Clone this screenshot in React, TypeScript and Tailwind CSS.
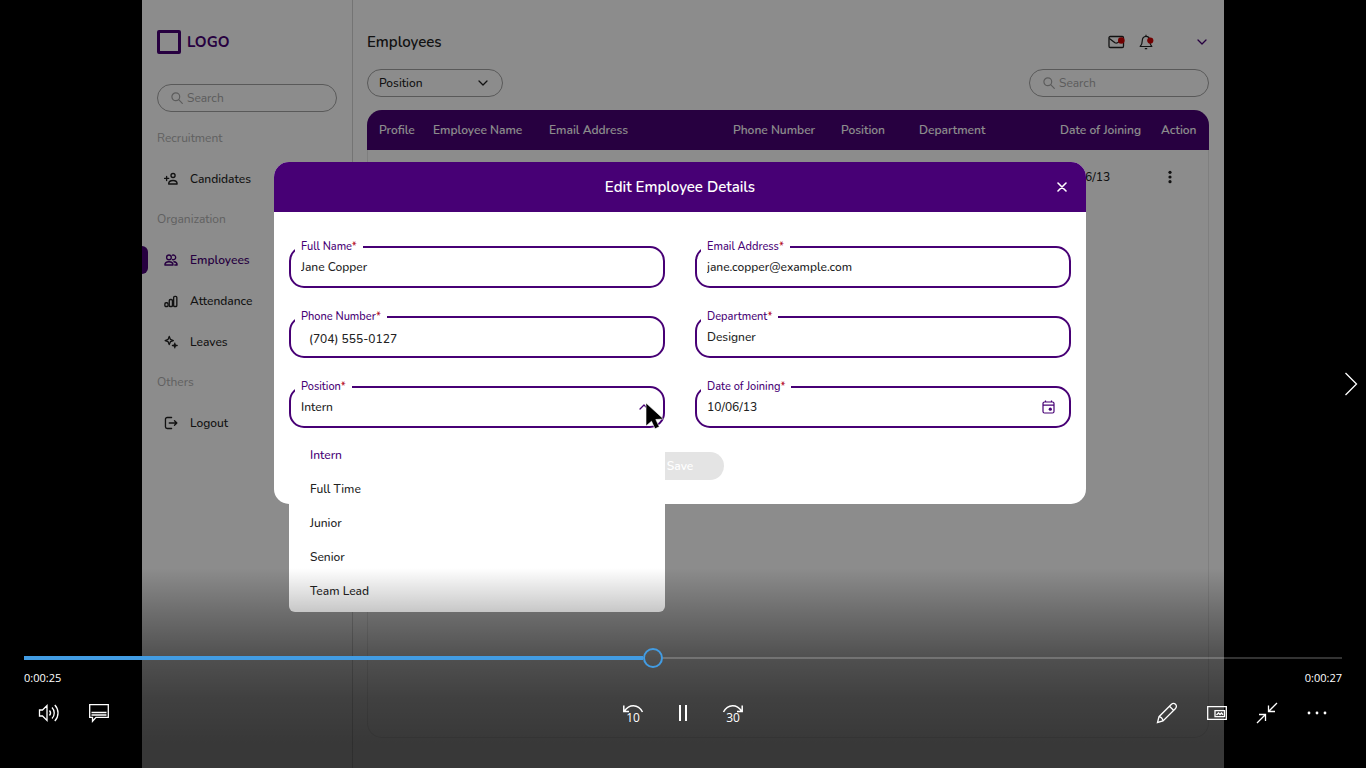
import React, { ReactNode } from "react";

const navGroups = [
  { title: "Recruitment", items: [{ name: "Candidates", icon: "candidates" }] },
  {
    title: "Organization",
    items: [
      { name: "Employees", icon: "employees", active: true },
      { name: "Attendance", icon: "attendance" },
      { name: "Leaves", icon: "leaves" },
    ],
  },
  { title: "Others", items: [{ name: "Logout", icon: "logout" }] },
];

const positions = ["Intern", "Full Time", "Junior", "Senior", "Team Lead"];

const navPaths: Record<string, ReactNode> = {
  candidates: (
    <>
      <circle cx="15.500" cy="6" r="3.500" />
      <path d="M8 20.500h14.500c0-4.500-2.500-6-7-6s-7.500 1.500-7.500 6zM4.500 7.500v7M1 11h7" />
    </>
  ),
  employees: (
    <>
      <circle cx="8.500" cy="7.500" r="4" />
      <path d="M1.500 20.500h14c0-4-2.500-5.500-7-5.500s-7 1.500-7 5.500zM14.500 3.800a4 4 0 1 1 0 7.400M17 15c3.500.3 5.500 2 5.500 5.500h-4" />
    </>
  ),
  attendance: (
    <>
      <rect x="1.500" y="15" width="5.500" height="6.500" rx="2" />
      <rect x="9" y="9.500" width="5.500" height="12" rx="2" />
      <rect x="16.500" y="4" width="5.500" height="17.500" rx="2" />
    </>
  ),
  leaves: (
    <>
      <path d="M9 2.500l2 5 5 2-5 2-2 5-2-5-5-2 5-2z" />
      <path d="M18.500 14v8M14.500 18h8M18.500 16l2 2-2 2-2-2z" fill="currentColor" />
    </>
  ),
  logout: <path d="M13 2.500H5.500a3 3 0 0 0-3 3v13a3 3 0 0 0 3 3H13M9 12h13M18 8l4 4-4 4" />,
};

function NavIcon({ name }: { name: string }) {
  return (
    <svg viewBox="0 0 24 24" className="size-[14px] shrink-0" fill="none" stroke="currentColor" strokeWidth="2.300" strokeLinecap="round" strokeLinejoin="round" aria-hidden="true">
      {navPaths[name]}
    </svg>
  );
}

function Chevron({ className }: { className: string }) {
  return (
    <svg viewBox="0 0 10 6" className={className} fill="none" stroke="currentColor" strokeWidth="1.300" strokeLinecap="round" strokeLinejoin="round" aria-hidden="true">
      <path d="M1 1l4 4 4-4" />
    </svg>
  );
}

function SearchBox({ label }: { label: string }) {
  return (
    <label className="flex h-7 w-[180px] items-center gap-1 rounded-full border border-[#a3a3a3] pr-3 pl-[13px] text-[#a8a8a8]">
      <svg viewBox="0 0 12 12" className="size-3 shrink-0" fill="none" stroke="currentColor" strokeWidth="1.200" strokeLinecap="round" aria-hidden="true">
        <circle cx="4.800" cy="4.800" r="3.900" />
        <path d="M7.700 7.700l3.600 3.600" />
      </svg>
      <input type="text" aria-label={label} placeholder="Search" className="w-full min-w-0 bg-transparent outline-none placeholder:text-[#a8a8a8]" />
    </label>
  );
}

function Sidebar() {
  return (
    <aside className="flex w-[211px] shrink-0 flex-col border-r border-[#d4d4d4] pt-[30px]">
      <div className="flex h-6 items-center gap-[6px] pl-[15px] text-[#470075]">
        <span className="size-6 rounded-xs border-3 border-current" />
        <span className="text-[15px] font-bold">LOGO</span>
      </div>
      <div className="mt-[30px] mb-[6px] pl-[15px]">
        <SearchBox label="Search menu" />
      </div>
      <nav>
        {navGroups.map((group) => (
          <section key={group.title}>
            <h2 className="h-10 pl-[15px] leading-10 text-[#b0b0b0]">{group.title}</h2>
            <ul>
              {group.items.map((item) => (
                <li key={item.name} className="flex h-[41px] items-center">
                  <span className={item.active ? "h-7 w-[6px] rounded-r-md bg-[#470075]" : "w-[6px]"} />
                  <a href="#" className={item.active ? "flex items-center gap-3 pl-4 font-semibold text-[#470075]" : "flex items-center gap-3 pl-4 font-medium"}>
                    <NavIcon name={item.icon} />
                    {item.name}
                  </a>
                </li>
              ))}
            </ul>
          </section>
        ))}
      </nav>
    </aside>
  );
}

function EmployeesPage() {
  return (
    <section className="flex min-w-0 flex-1 flex-col pt-[30px] pr-[15px] pb-[30px] pl-[14px]">
      <header className="flex h-6 items-center">
        <h1 className="flex-1 text-[15px] font-semibold">Employees</h1>
        <div className="flex items-center gap-[14px] pr-[2px]">
          <button aria-label="Messages">
            <svg viewBox="0 0 17 16" className="h-4 w-[17px]" fill="none" stroke="currentColor" strokeWidth="1.300" strokeLinejoin="round">
              <rect x="1" y="2.500" width="14.500" height="11" rx="1.200" />
              <path d="M1.300 4.500l5.700 4.200c.8.500 1.700.5 2.500 0L13 6.500" />
              <circle cx="13.300" cy="6.500" r="3.300" fill="#d00000" stroke="none" />
            </svg>
          </button>
          <button aria-label="Notifications">
            <svg viewBox="0 0 16 16" className="size-4" fill="none" stroke="currentColor" strokeWidth="1.200" strokeLinejoin="round">
              <path d="M7 2.300C4.500 2.300 3.300 4.300 3.300 6.500c0 3-.8 4.500-2.100 6h11.600c-1.300-1.500-2.100-3-2.100-6 0-2.200-1.200-4.200-3.700-4.200zM7 .7v1.600M5.800 14.600h2.400" />
              <circle cx="11.300" cy="6.500" r="3.100" fill="#d00000" stroke="none" />
            </svg>
          </button>
          <span className="w-[14px]" />
          <button aria-label="Account menu" className="text-[#470075]">
            <Chevron className="h-[6px] w-[10px]" />
          </button>
        </div>
      </header>
      <div className="mt-[15px] flex items-center justify-between">
        <div className="grid w-[136px] items-center">
          <select aria-label="Filter by position" className="col-start-1 row-start-1 h-7 appearance-none rounded-full border border-[#a3a3a3] bg-transparent px-[11px] font-medium">
            <option>Position</option>
          </select>
          <Chevron className="pointer-events-none col-start-1 row-start-1 mr-[15px] h-[6px] w-[10px] justify-self-end" />
        </div>
        <SearchBox label="Search employees" />
      </div>
      <div className="mt-[13px] flex-1 overflow-hidden rounded-[15px] shadow-[inset_0_0_0_1px_#e8e8e8]">
        <table className="w-full table-fixed text-left">
          <thead className="h-10 bg-[#470075] text-white">
            <tr className="[&>th]:p-0 [&>th]:font-semibold">
              <th className="w-[66px]"><span className="pl-3">Profile</span></th>
              <th className="w-[116px]">Employee Name</th>
              <th>Email Address</th>
              <th className="w-[108px]">Phone Number</th>
              <th className="w-[78px]">Position</th>
              <th className="w-[141px]">Department</th>
              <th className="w-[101px]">Date of Joining</th>
              <th className="w-[48px]">Action</th>
            </tr>
          </thead>
          <tbody>
            <tr className="h-[53px] font-medium">
              <td colSpan={6} />
              <td>10/06/13</td>
              <td>
                <button aria-label="Row actions" className="ml-[6px] block">
                  <svg viewBox="0 0 6 14" className="h-[14px] w-[6px]" fill="currentColor">
                    <circle cx="3" cy="2.300" r="1.600" />
                    <circle cx="3" cy="7" r="1.600" />
                    <circle cx="3" cy="11.700" r="1.600" />
                  </svg>
                </button>
              </td>
            </tr>
          </tbody>
        </table>
      </div>
    </section>
  );
}

function Field({ id, label, children }: { id: string; label: string; children: ReactNode }) {
  return (
    <fieldset className="relative h-12 min-w-0 rounded-[15px] border-2 border-[#470075]">
      <legend className="ml-1 h-[14px] px-[6px] text-[11px] leading-[14px] text-[#470075]">
        <label htmlFor={id}>
          {label}
          <span className="text-[#b00020]">*</span>
        </label>
      </legend>
      {children}
    </fieldset>
  );
}

function EditDialog() {
  return (
    <div role="dialog" aria-labelledby="dialog-title" className="rounded-[15px] bg-white font-medium">
      <header className="grid h-[50px] grid-cols-[1fr_auto_1fr] items-center rounded-t-[15px] bg-[#470075] text-white">
        <h2 id="dialog-title" className="col-start-2 text-[15px] font-semibold">Edit Employee Details</h2>
        <button aria-label="Close" className="mr-[19px] justify-self-end">
          <svg viewBox="0 0 10 10" className="size-[10px]" fill="none" stroke="currentColor" strokeWidth="1.600" strokeLinecap="round">
            <path d="M1 1l8 8M9 1L1 9" />
          </svg>
        </button>
      </header>
      <form className="px-[15px] pt-7 pb-6">
        <div className="grid grid-cols-2 gap-x-[30px] gap-y-[22px]">
          <Field id="full-name" label="Full Name">
            <input id="full-name" type="text" defaultValue="Jane Copper" className="block h-[26px] w-full bg-transparent px-[10px] outline-none" />
          </Field>
          <Field id="email" label="Email Address">
            <input id="email" type="email" defaultValue="jane.copper@example.com" className="block h-[26px] w-full bg-transparent px-[10px] outline-none" />
          </Field>
          <Field id="phone" label="Phone Number">
            <input id="phone" type="tel" defaultValue="(704) 555-0127" className="block h-[30px] w-full bg-transparent px-[18px] outline-none" />
          </Field>
          <Field id="department" label="Department">
            <input id="department" type="text" defaultValue="Designer" className="block h-[26px] w-full bg-transparent px-[10px] outline-none" />
          </Field>
          <Field id="position" label="Position">
            <div className="flex items-center pr-[14px]">
              <select id="position" defaultValue="Intern" className="h-[26px] min-w-0 flex-1 appearance-none bg-transparent px-[10px] outline-none">
                {positions.map((position) => (
                  <option key={position}>{position}</option>
                ))}
              </select>
              <Chevron className="h-[6px] w-[10px] rotate-180 text-[#470075]" />
            </div>
            <ul className="absolute -inset-x-[2px] top-full z-10 mt-[2px] rounded-b-md bg-white pt-[10px] pb-1">
              {positions.map((position) => (
                <li key={position}>
                  <button type="button" className={position === "Intern" ? "h-[34px] w-full px-[21px] text-left text-[#470075]" : "h-[34px] w-full px-[21px] text-left"}>
                    {position}
                  </button>
                </li>
              ))}
            </ul>
            <svg viewBox="0 0 20 28" className="pointer-events-none absolute top-2 -right-[2px] z-20 h-7 w-5" aria-hidden="true">
              <path d="M1 1v23l5.500-4.800 3.500 7.600 4.300-2-3.500-7.300 7.700-.5z" fill="#000" stroke="#fff" strokeWidth=".6" />
            </svg>
          </Field>
          <Field id="joining" label="Date of Joining">
            <div className="flex items-center pr-[14px]">
              <input id="joining" type="text" defaultValue="10/06/13" className="h-[26px] min-w-0 flex-1 bg-transparent px-[10px] outline-none" />
              <button type="button" aria-label="Open calendar" className="text-[#470075]">
                <svg viewBox="0 0 13 14" className="h-[14px] w-[13px]" fill="none" stroke="currentColor" strokeWidth="1.200">
                  <rect x="1" y="2" width="11" height="11" rx="1.500" />
                  <path d="M1 5.200h11M3.500.5V2M9.500.5V2" />
                  <circle cx="8.300" cy="9.200" r="1.600" fill="currentColor" stroke="none" />
                </svg>
              </button>
            </div>
          </Field>
        </div>
        <button type="button" className="mx-auto mt-6 block h-7 w-[87px] rounded-full bg-[#e4e4e4] font-semibold text-white">Save</button>
      </form>
    </div>
  );
}

function PlayerButton({ label, children }: { label: string; children: ReactNode }) {
  return (
    <button aria-label={label} className="flex size-[50px] items-center justify-center">
      <svg viewBox="0 0 22 22" className="size-[22px]" fill="none" stroke="currentColor" strokeWidth="1.300">
        {children}
      </svg>
    </button>
  );
}

function SkipButton({ label, seconds, children }: { label: string; seconds: string; children: ReactNode }) {
  return (
    <button aria-label={label} className="flex size-[50px] flex-col items-center justify-center">
      <svg viewBox="0 0 22 9" className="h-[9px] w-[22px]" fill="none" stroke="currentColor" strokeWidth="1.500">
        {children}
      </svg>
      <span className="text-xs leading-[10px]">{seconds}</span>
    </button>
  );
}

function Player() {
  return (
    <div className="relative col-start-1 row-start-1 flex flex-col justify-end font-['Segoe_UI','Open_Sans',sans-serif] text-white">
      <button aria-label="Next" className="absolute top-1/2 right-2 -translate-y-1/2">
        <svg viewBox="0 0 14 24" className="h-6 w-[14px]" fill="none" stroke="currentColor" strokeWidth="1.300">
          <path d="M1.500 1l11 11-11 11" />
        </svg>
      </button>
      <div className="bg-[linear-gradient(to_bottom,rgba(0,0,0,0)_0px,rgba(0,0,0,0.22)_44px,rgba(0,0,0,0.43)_90px,rgba(0,0,0,0.54)_130px,rgba(0,0,0,0.6)_175px)] px-6 pt-20 pb-[30px]">
        <div className="relative flex h-5 items-center">
          <span className="h-1 w-[47%] bg-[#429ce3]" />
          <span className="size-5 shrink-0 rounded-full border-2 border-[#429ce3]" />
          <span className="h-[2px] flex-1 bg-white/20" />
          <input type="range" aria-label="Seek" min="0" max="100" defaultValue="47" className="absolute inset-0 w-full opacity-0" />
        </div>
        <div className="flex h-5 items-center justify-between text-[11px]">
          <span>0:00:25</span>
          <span>0:00:27</span>
        </div>
        <div className="flex">
          <div className="flex flex-1">
            <PlayerButton label="Volume">
              <path d="M1.500 8v6h3l4.500 4.500v-15L4.500 8zM11.500 8.500c1.300 1.500 1.300 3.500 0 5M14 5.500c3 3 3 8 0 11M16.800 3c4.300 4.500 4.300 11.500 0 16" />
            </PlayerButton>
            <PlayerButton label="Captions">
              <path d="M1.700 2.700h18.600v12.600H8l-3.500 4v-4H1.700z" />
              <path d="M3.500 10.500h15M3.500 13h15" />
            </PlayerButton>
          </div>
          <div className="flex">
            <SkipButton label="Back 10 seconds" seconds="10">
              <path d="M2.500 7c4.500-7 13.500-7.500 18 1M1.800 1.500v6H7" />
            </SkipButton>
            <PlayerButton label="Pause">
              <path d="M8 3v16M14 3v16" strokeWidth="2" />
            </PlayerButton>
            <SkipButton label="Forward 30 seconds" seconds="30">
              <path d="M19.500 7C15 0 6 -.5 1.500 8M20.200 1.500v6H15" />
            </SkipButton>
          </div>
          <div className="flex flex-1 justify-end">
            <PlayerButton label="Edit">
              <path d="M1.500 20.500L3 14.700 15.200 2.500c1.600-1.600 3.200-1.300 4.300-.2s1.400 2.800-.2 4.400L7 19zM13.500 4.200l4.300 4.300M3 14.700c2 .3 3.600 2 4 4.300" />
            </PlayerButton>
            <PlayerButton label="Mini view">
              <path d="M1.700 4.700h18.600v12.600H1.700z" />
              <path d="M9 8.700h9.500v6H9zM10.500 13l2-2 1.500 1.500 1.500-1.500 1.500 1.700" />
            </PlayerButton>
            <PlayerButton label="Exit full screen">
              <path d="M21 1l-8.500 8.500M12.500 3.500v6h6.500M1 21l8.500-8.500M3 12.500h6.500V19" />
            </PlayerButton>
            <PlayerButton label="More options">
              <g fill="currentColor" stroke="none">
                <circle cx="3" cy="11" r="1.400" />
                <circle cx="11" cy="11" r="1.400" />
                <circle cx="19" cy="11" r="1.400" />
              </g>
            </PlayerButton>
          </div>
        </div>
      </div>
    </div>
  );
}

export default function App() {
  return (
    <main className="grid min-h-screen bg-black font-['Nunito','Lato',sans-serif] text-xs leading-5 text-[#222222]">
      <div className="col-start-1 row-start-1 mx-[142px] flex bg-white">
        <Sidebar />
        <EmployeesPage />
      </div>
      <div className="isolate col-start-1 row-start-1 mx-[142px] bg-black/45 pt-[162px] pr-[138px] pl-[132px]">
        <EditDialog />
      </div>
      <Player />
    </main>
  );
}
